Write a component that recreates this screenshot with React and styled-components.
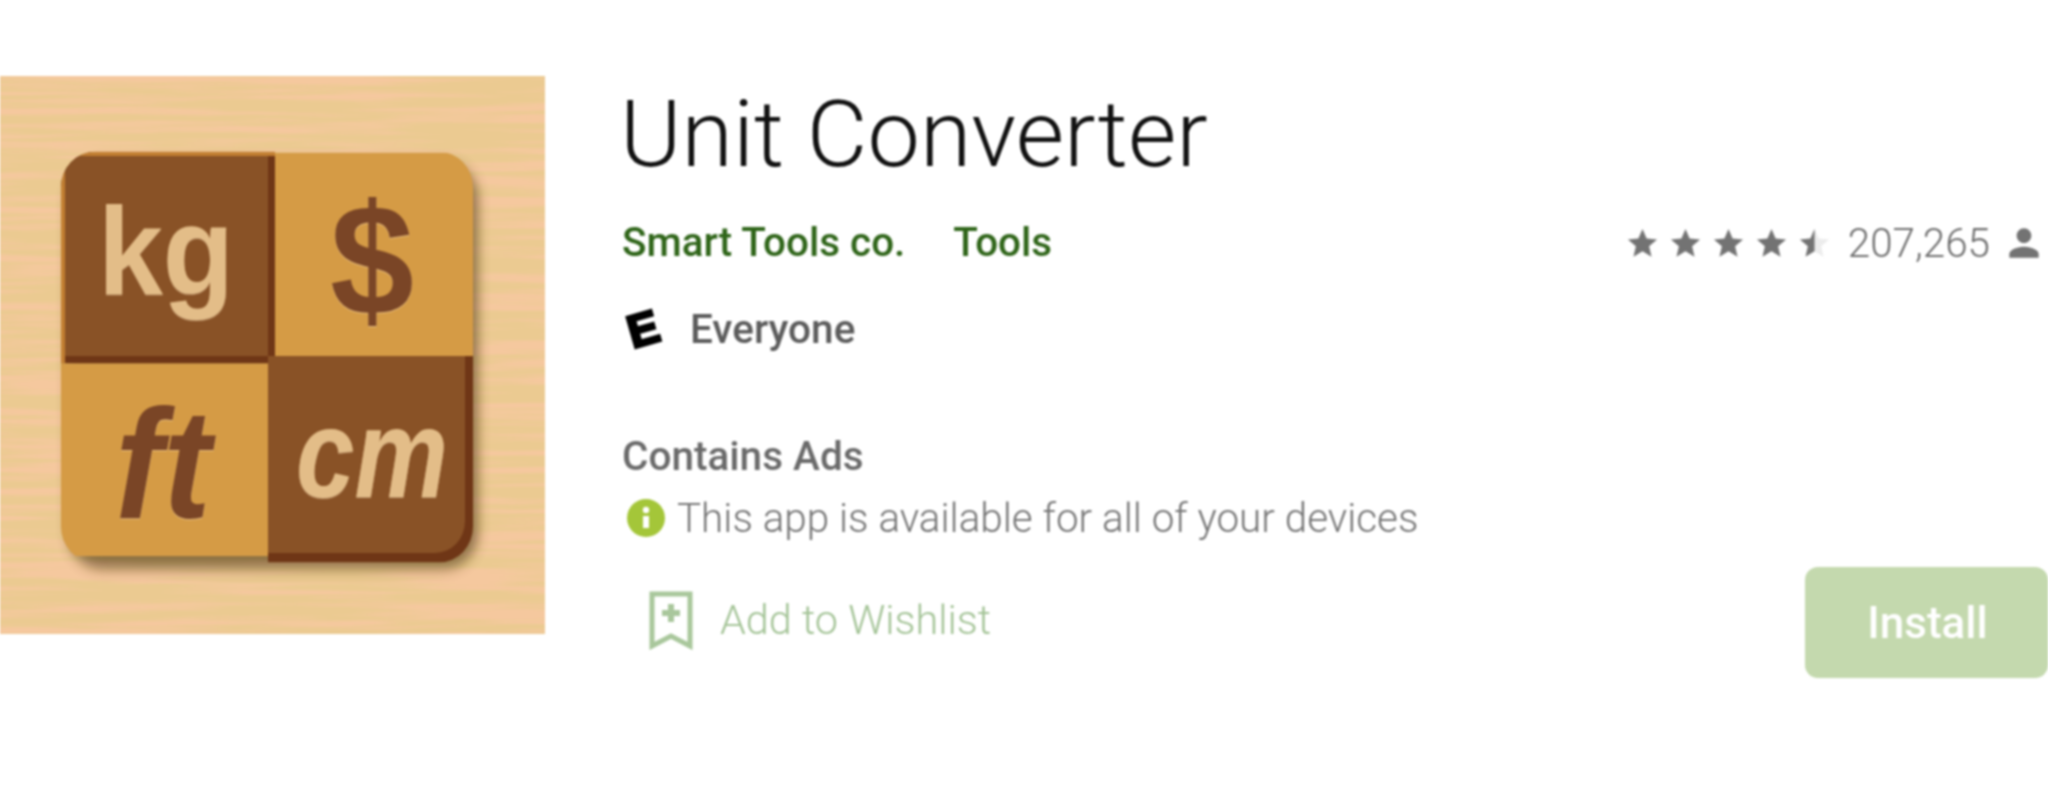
import React from "react";
import styled, { createGlobalStyle } from "styled-components";

const GlobalStyle = createGlobalStyle`
	html, body {
		margin: 0;
		padding: 0;
		background: #fff;
		overflow: hidden;
	}
`;

const Page = styled.div`
	display: flex;
	align-items: flex-start;
	gap: 77px;
	width: 2048px;
	height: 809px;
	padding-top: 76px;
	box-sizing: border-box;
	font-family: Roboto, "Liberation Sans", sans-serif;
	filter: blur(0.8px);
`;

const Cover = styled.svg`
	display: block;
	flex: none;
	width: 545px;
	height: 558px;
`;

const Details = styled.div`
	flex: 1;
	display: flex;
	flex-direction: column;
	min-width: 0;
`;

const Title = styled.h1`
	margin: 8px 0 0 -2px;
	font-size: 93.5px;
	line-height: 100px;
	font-weight: 300;
	color: #111;
	white-space: nowrap;
`;

const MetaRow = styled.div`
	display: flex;
	justify-content: space-between;
	align-items: center;
	height: 44px;
	margin-top: 37px;
`;

const Links = styled.div`
	display: flex;
	gap: 48px;
`;

const Link = styled.a`
	font-size: 40.4px;
	font-weight: 500;
	line-height: 44px;
	color: #2f6519;
`;

const Rating = styled.div`
	display: flex;
	align-items: center;
	padding-right: 2px;
`;

const Stars = styled.div`
	display: flex;
	gap: 8px;
	margin-right: 16px;
`;

const Count = styled.span`
	font-size: 40.4px;
	font-weight: 300;
	color: #6c6c6c;
	margin-right: 12px;
`;

const Glyph = styled.svg`
	display: block;
	width: ${(p) => p.$size}px;
	height: ${(p) => p.$size}px;
	fill: #737373;
`;

const AgeRow = styled.div`
	display: flex;
	align-items: center;
	height: 44px;
	margin-top: 42px;
`;

const AgeBadge = styled.span`
	width: 42px;
	font-family: "Liberation Sans", sans-serif;
	font-size: 46px;
	line-height: 44px;
	font-weight: 700;
	color: #000;
	text-align: center;
	-webkit-text-stroke: 3px #000;
	transform: rotate(-16deg);
	margin-right: 26px;
`;

const AgeLabel = styled.span`
	font-size: 40.5px;
	font-weight: 500;
	color: #5c5c5c;
`;

const Notice = styled.div`
	margin-top: 83px;
	font-size: 40.5px;
	line-height: 44px;
	font-weight: 500;
	color: #6a6a6a;
`;

const InfoRow = styled.div`
	display: flex;
	align-items: center;
	height: 44px;
	margin-top: 18px;
`;

const InfoIcon = styled.svg`
	display: block;
	width: 38px;
	height: 38px;
	margin: 0 12px 0 5px;
`;

const InfoText = styled.span`
	font-size: 40.4px;
	font-weight: 300;
	color: #747474;
	white-space: nowrap;
`;

const Actions = styled.div`
	display: flex;
	justify-content: space-between;
	align-items: center;
	margin-top: 27px;
`;

const Wishlist = styled.div`
	display: flex;
	align-items: center;
	gap: 26px;
	padding: 0 0 5px 26px;
`;

const WishIcon = styled.svg`
	display: block;
	width: 46px;
	height: 60px;
`;

const WishText = styled.span`
	font-size: 41.4px;
	font-weight: 300;
	color: #a3c396;
	white-space: nowrap;
`;

const InstallButton = styled.button`
	width: 243px;
	height: 111px;
	border: 0;
	padding: 0 0 0 2px;
	border-radius: 13px;
	background: #c4d9ae;
	color: #fff;
	font-family: inherit;
	font-size: 44px;
	font-weight: 500;
`;

const LogoText = styled.text`
	font-family: "Liberation Sans", sans-serif;
	filter: drop-shadow(0 1.5px 0 rgba(255, 232, 196, 0.45));
`;

const starPath =
	"M12 17.27L18.18 21l-1.64-7.03L22 9.24l-7.19-.61L12 2 9.19 8.63 2 9.24l5.46 4.73L5.82 21z";

const Star = ({ half }) => (
	<Glyph $size={35} viewBox="0 0 24 24">
		{half && <path d={starPath} fill="#ececec" />}
		<path d={starPath} style={half ? { clipPath: "inset(0 50% 0 0)" } : undefined} />
	</Glyph>
);

// app logo, the drawing from the store listing
const AppIcon = () => (
	<Cover viewBox="0 0 545 530" preserveAspectRatio="none">
		<defs>
			<filter id="grain" x="0" y="0" width="100%" height="100%">
				<feTurbulence type="fractalNoise" baseFrequency="0.005 0.13" numOctaves="4" seed="8" />
				<feColorMatrix
					values="0 0 0 0 0.91
						0 0 0 0 0.58
						0 0 0 0 0.34
						4.2 0 0 0 -1.75"
				/>
			</filter>
			<filter id="soft" x="-10%" y="-10%" width="125%" height="125%">
				<feGaussianBlur stdDeviation="6" />
			</filter>
			<clipPath id="board">
				<rect x="61" y="72" width="412" height="390" rx="34" />
			</clipPath>
		</defs>
		<rect width="545" height="530" fill="#ebca91" />
		<rect width="545" height="530" filter="url(#grain)" />
		<rect x="68" y="82" width="410" height="386" rx="34" fill="#4d3410" opacity="0.6" filter="url(#soft)" />
		<g clipPath="url(#board)">
			<rect x="61" y="72" width="214" height="201" fill="#6f3616" />
			<rect x="61" y="72" width="214" height="4" fill="#c27f32" />
			<rect x="61" y="72" width="4" height="201" fill="#c27f32" />
			<rect x="65" y="76" width="203" height="190" fill="#895226" />
			<rect x="275" y="73" width="198" height="193" fill="#d59b45" />
			<rect x="61" y="273" width="207" height="183" fill="#d59b45" />
			<rect x="268" y="266" width="205" height="196" fill="#6f3616" />
			<path d="M268 266h197v157a30 30 0 0 1-30 30h-167z" fill="#895226" />
		</g>
		<LogoText x="98" y="207" fontSize="118" fontWeight="700" fill="#e3bd88" textLength="136" lengthAdjust="spacingAndGlyphs">
			kg
		</LogoText>
		<LogoText x="330" y="226" fontSize="150" fontWeight="700" fill="#7a4526" textLength="84" lengthAdjust="spacingAndGlyphs">
			$
		</LogoText>
		<LogoText x="115" y="420" fontSize="148" fontWeight="700" fontStyle="italic" fill="#7a4526" textLength="96" lengthAdjust="spacingAndGlyphs">
			ft
		</LogoText>
		<LogoText x="296" y="400" fontSize="120" fontWeight="700" fontStyle="italic" fill="#e3bd88" textLength="152" lengthAdjust="spacingAndGlyphs">
			cm
		</LogoText>
	</Cover>
);

export default function App() {
	return (
		<>
			<GlobalStyle />
			<Page>
				<AppIcon />
				<Details>
					<Title>Unit Converter</Title>
					<MetaRow>
						<Links>
							<Link>Smart Tools co.</Link>
							<Link>Tools</Link>
						</Links>
						<Rating>
							<Stars>
								<Star />
								<Star />
								<Star />
								<Star />
								<Star half />
							</Stars>
							<Count>207,265</Count>
							<Glyph $size={44} viewBox="0 0 24 24">
								<path d="M12 12c2.21 0 4-1.79 4-4s-1.79-4-4-4-4 1.79-4 4 1.79 4 4 4zm0 2c-2.67 0-8 1.34-8 4v2h16v-2c0-2.66-5.33-4-8-4z" />
							</Glyph>
						</Rating>
					</MetaRow>
					<AgeRow>
						<AgeBadge>E</AgeBadge>
						<AgeLabel>Everyone</AgeLabel>
					</AgeRow>
					<Notice>Contains Ads</Notice>
					<InfoRow>
						<InfoIcon viewBox="0 0 38 38">
							<circle cx="19" cy="19" r="19" fill="#a4c639" />
							<circle cx="19" cy="11" r="3.2" fill="#fff" />
							<rect x="16" y="17" width="6" height="12" fill="#fff" />
						</InfoIcon>
						<InfoText>This app is available for all of your devices</InfoText>
					</InfoRow>
					<Actions>
						<Wishlist>
							<WishIcon viewBox="0 0 46 60" fill="none">
								<path d="M4 4h38v52L23 46 4 56z" stroke="#a9c79c" strokeWidth="5" />
								<path d="M23 14v18M14 23h18" stroke="#a9c79c" strokeWidth="6" />
							</WishIcon>
							<WishText>Add to Wishlist</WishText>
						</Wishlist>
						<InstallButton>Install</InstallButton>
					</Actions>
				</Details>
			</Page>
		</>
	);
}
